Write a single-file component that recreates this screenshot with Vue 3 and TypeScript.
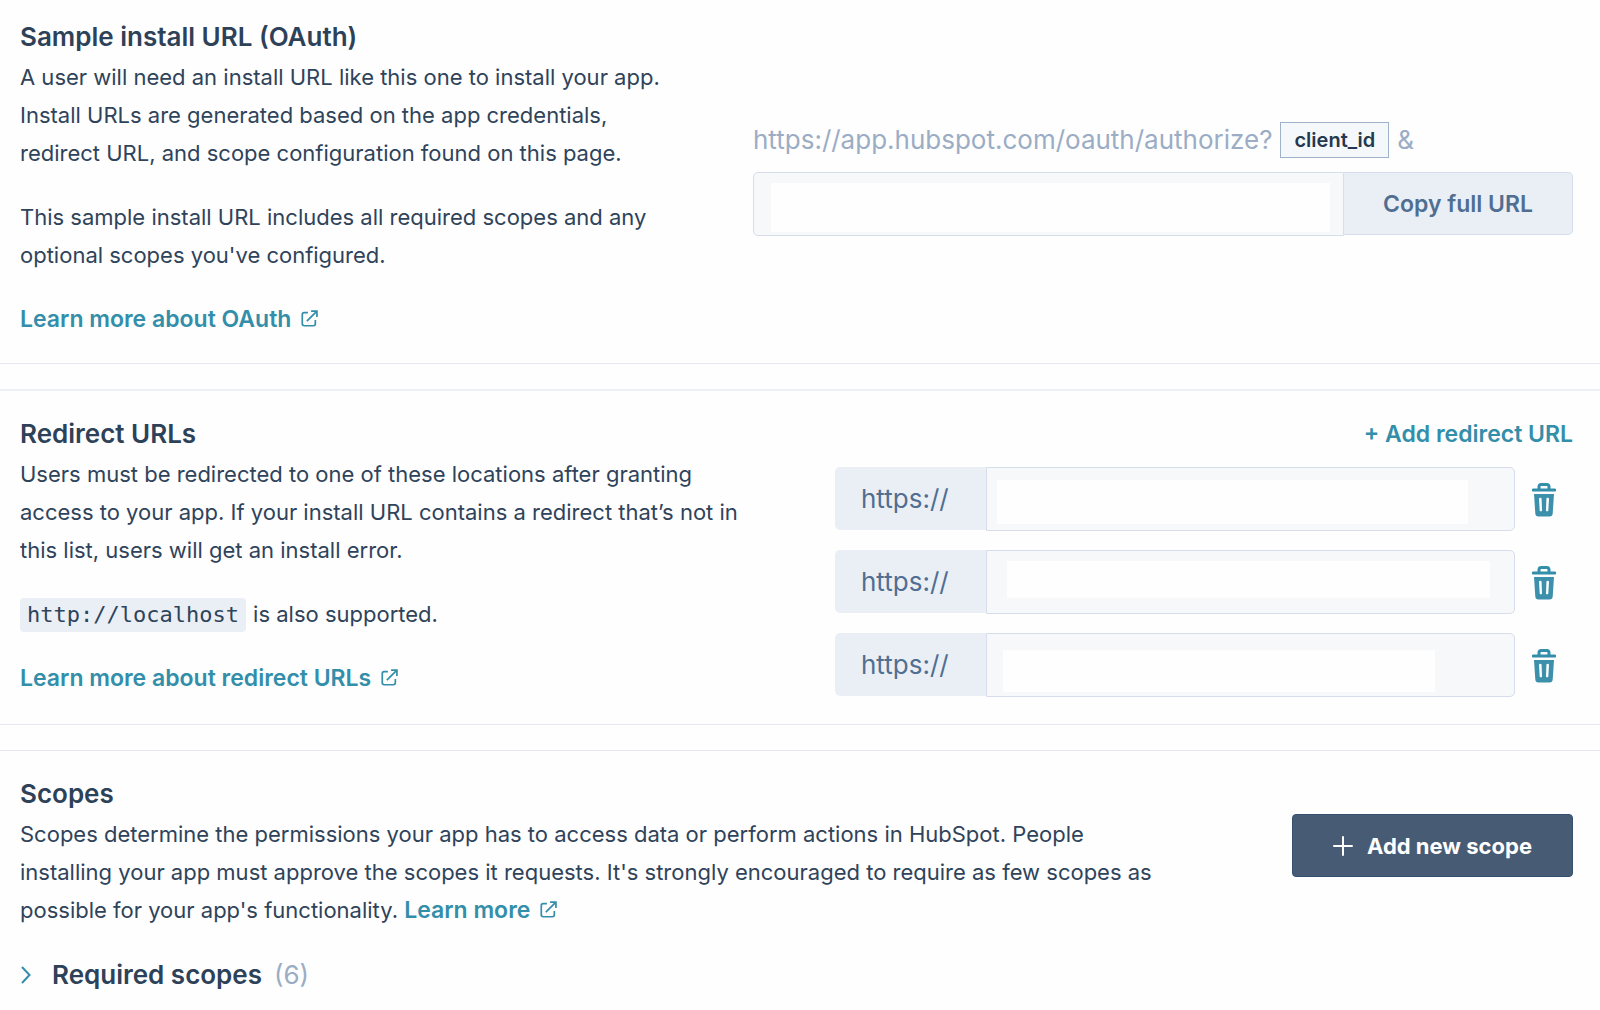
<script setup lang="ts">
import { ref } from 'vue'

interface Mask {
  left: number
  right: number
  top: number
  bottom: number
}

interface RedirectUrl {
  id: number
  value: string
  mask: Mask
}

const installUrl = ref('')
const requiredCount = 6
const redirects = ref<RedirectUrl[]>([
  { id: 1, value: '', mask: { left: 11, right: 47, top: 13, bottom: 7 } },
  { id: 2, value: '', mask: { left: 21, right: 25, top: 11, bottom: 16 } },
  { id: 3, value: '', mask: { left: 17, right: 80, top: 17, bottom: 5 } },
])

const maskStyle = (mask: Mask) => ({
  left: `${mask.left}px`,
  right: `${mask.right}px`,
  top: `${mask.top}px`,
  bottom: `${mask.bottom}px`,
})
</script>

<template>
  <main class="page">
    <section class="panel install">
      <div class="copy">
        <h2>Sample install URL (OAuth)</h2>
        <p>
          A user will need an install URL like this one to install your app.<br />
          Install URLs are generated based on the app credentials,<br />
          redirect URL, and scope configuration found on this page.
        </p>
        <p>
          This sample install URL includes all required scopes and any<br />
          optional scopes you've configured.
        </p>
        <p>
          <a href="#oauth">Learn more about OAuth<svg class="ext" viewBox="0 0 16 16" aria-hidden="true"><path d="M6.5 2.5H3A1.8 1.8 0 0 0 1.2 4.300V13A1.800 1.800 0 0 0 3 14.800H11.700A1.800 1.800 0 0 0 13.500 13V9.500M5.500 10.500L14.500 1.500M9.500 1H15V6.500" /></svg></a>
        </p>
      </div>
      <div class="url-box">
        <label class="url-line" for="install-url">
          <span>https://app.hubspot.com/oauth/authorize?</span>
          <span class="chip">client_id</span>
          <span>&amp;</span>
        </label>
        <div class="copy-row">
          <div class="field left-round">
            <input id="install-url" v-model="installUrl" type="text" readonly />
            <span class="mask" :style="maskStyle({ left: 18, right: 14, top: 11, bottom: 4 })"></span>
          </div>
          <button type="button" class="copy-btn">Copy full URL</button>
        </div>
      </div>
    </section>

    <section class="panel redirect">
      <div class="copy">
        <h2>Redirect URLs</h2>
        <p>
          Users must be redirected to one of these locations after granting<br />
          access to your app. If your install URL contains a redirect that’s not in<br />
          this list, users will get an install error.
        </p>
        <p><code>http://localhost</code> is also supported.</p>
        <p>
          <a href="#redirects">Learn more about redirect URLs<svg class="ext" viewBox="0 0 16 16" aria-hidden="true"><path d="M6.5 2.5H3A1.8 1.8 0 0 0 1.2 4.300V13A1.800 1.800 0 0 0 3 14.800H11.700A1.800 1.800 0 0 0 13.500 13V9.500M5.500 10.500L14.500 1.500M9.500 1H15V6.500" /></svg></a>
        </p>
      </div>
      <div class="redirect-side">
        <button type="button" class="link-btn">+ Add redirect URL</button>
        <div class="redirect-list">
          <div v-for="item in redirects" :key="item.id" class="redirect-row">
            <label class="prefix" :for="`redirect-${item.id}`">https://</label>
            <div class="field right-round">
              <input :id="`redirect-${item.id}`" v-model="item.value" type="text" />
              <span class="mask" :style="maskStyle(item.mask)"></span>
            </div>
            <button type="button" class="trash" aria-label="Delete redirect URL">
              <svg viewBox="0 0 24 34" aria-hidden="true">
                <path class="lid" d="M1.300 7H22.700M7 6.500V3.800A2.300 2.300 0 0 1 9.300 1.500H14.700A2.300 2.300 0 0 1 17 3.800V6.500" />
                <path class="can" fill-rule="evenodd" d="M2 11H22L20.700 30.500A3.200 3.200 0 0 1 17.500 33.500H6.500A3.200 3.200 0 0 1 3.300 30.500ZM7 16L7.700 27.500A1.200 1.200 0 0 0 10 27.500L9.600 16A1.300 1.300 0 0 0 7 16ZM14.400 16L14 27.500A1.200 1.200 0 0 0 16.300 27.500L17 16A1.300 1.300 0 0 0 14.400 16Z" />
              </svg>
            </button>
          </div>
        </div>
      </div>
    </section>

    <section class="panel scopes">
      <div class="scopes-head">
        <div class="copy">
          <h2>Scopes</h2>
          <p>
            Scopes determine the permissions your app has to access data or perform actions in HubSpot. People<br />
            installing your app must approve the scopes it requests. It's strongly encouraged to require as few scopes as<br />
            possible for your app's functionality.
            <a href="#scopes">Learn more<svg class="ext" viewBox="0 0 16 16" aria-hidden="true"><path d="M6.5 2.5H3A1.8 1.8 0 0 0 1.2 4.300V13A1.800 1.800 0 0 0 3 14.800H11.700A1.800 1.800 0 0 0 13.500 13V9.500M5.500 10.500L14.500 1.500M9.500 1H15V6.500" /></svg></a>
          </p>
        </div>
        <button type="button" class="add-btn">
          <svg viewBox="0 0 20 20" aria-hidden="true"><path d="M10 1V19M1 10H19" /></svg>
          Add new scope
        </button>
      </div>
      <button type="button" class="expander" aria-expanded="false">
        <svg viewBox="0 0 12 18" aria-hidden="true"><path d="M2 1L9.500 9L2 17" /></svg>
        <span class="expander-title">Required scopes</span>
        <span class="count">({{ requiredCount }})</span>
      </button>
    </section>
  </main>
</template>

<style>
body {
  margin: 0;
  background: #fefefe;
}
</style>

<style scoped>
.page {
  font-family: Inter, "Open Sans", sans-serif;
  font-size: 22px;
  font-weight: 400;
  line-height: 38px;
  color: #2f435a;
  overflow-x: hidden;
}
button,
input {
  font: inherit;
  box-sizing: border-box;
}
button {
  cursor: pointer;
}
.panel {
  box-sizing: border-box;
  padding: 23px 27px 27px 20px;
  border-top: 2px solid #eceff5;
  border-bottom: 1px solid #e5e8ee;
  margin-bottom: 25px;
}
.panel.install {
  padding-top: 17px;
  padding-bottom: 25px;
  border-top: 0;
}
.panel.scopes {
  border-top: 1px solid #e5e8ee;
  border-bottom: 0;
  margin-bottom: 0;
}
.copy {
  white-space: nowrap;
}
h2 {
  margin: 0 0 1px;
  font-size: 26px;
  font-weight: 600;
  line-height: 40px;
  color: #2d4258;
}
p {
  margin: 0 0 26px;
}
p:last-child {
  margin-bottom: 0;
}
a {
  color: #338eaa;
  font-size: 23px;
  font-weight: 600;
  line-height: 1;
  text-decoration: none;
}
.ext {
  width: 17px;
  height: 17px;
  margin-left: 10px;
  fill: none;
  stroke: #338eaa;
  stroke-width: 1.6;
}
code {
  display: inline-block;
  padding: 0 7px;
  margin-right: 1px;
  line-height: 34px;
  border-radius: 4px;
  background: #eaeff6;
  font-family: "DejaVu Sans Mono", monospace;
  font-size: 22px;
}
.install {
  display: grid;
  grid-template-columns: minmax(0, 733fr) minmax(0, 820fr);
}
.url-box {
  padding-top: 104px;
}
.url-line {
  display: flex;
  align-items: center;
  gap: 8px;
  height: 38px;
  margin-bottom: 13px;
  font-size: 26px;
  color: #9badc5;
  white-space: nowrap;
}
.chip {
  padding: 0 13px;
  border: 1px solid #9fb2cb;
  background: #f5f8fa;
  color: #24384f;
  font-size: 20px;
  font-weight: 600;
  line-height: 34px;
}
.copy-row {
  display: flex;
  align-items: flex-start;
}
.field {
  position: relative;
  flex: 1;
  height: 64px;
}
.field input {
  display: block;
  width: 100%;
  height: 100%;
  padding: 0 18px;
  border: 1px solid #d5deea;
  background: #f6f8fa;
  color: #33475b;
  outline: none;
}
.left-round input {
  border-radius: 5px 0 0 5px;
}
.right-round input {
  border-radius: 0 5px 5px 0;
}
.mask {
  position: absolute;
  background: #fefefe;
}
.copy-btn {
  width: 229px;
  height: 63px;
  padding: 0;
  border: 1px solid #d5deea;
  border-left: 0;
  border-radius: 0 5px 5px 0;
  background: #eaeff6;
  color: #506e91;
  font-size: 23px;
  font-weight: 600;
}
.redirect {
  display: grid;
  grid-template-columns: minmax(0, 815fr) minmax(0, 738fr);
}
.redirect-side {
  display: flex;
  flex-direction: column;
  gap: 13px;
}
.redirect-list {
  display: flex;
  flex-direction: column;
  gap: 19px;
}
.link-btn {
  align-self: flex-end;
  height: 40px;
  padding: 0;
  border: 0;
  background: none;
  color: #338eaa;
  font-size: 23px;
  font-weight: 600;
}
.redirect-row {
  display: flex;
  align-items: flex-start;
}
.prefix {
  width: 151px;
  box-sizing: border-box;
  padding-left: 26px;
  border-radius: 5px 0 0 5px;
  background: #eaeff6;
  color: #506e91;
  font-size: 26px;
  line-height: 63px;
}
.trash {
  width: 58px;
  height: 64px;
  padding: 2px 0 0 17px;
  border: 0;
  background: none;
}
.trash svg {
  display: block;
  width: 24px;
  height: 34px;
}
.lid {
  fill: none;
  stroke: #338eaa;
  stroke-width: 3;
  stroke-linecap: round;
}
.can {
  fill: #3c90ac;
}
.scopes-head {
  display: flex;
  justify-content: space-between;
  align-items: center;
}
.add-btn {
  display: flex;
  align-items: center;
  justify-content: center;
  gap: 14px;
  width: 281px;
  height: 63px;
  flex: none;
  margin-top: -12px;
  padding: 0;
  border: 1px solid #33506f;
  border-radius: 4px;
  background: #485b74;
  color: #fff;
  font-weight: 700;
}
.add-btn svg {
  width: 20px;
  height: 20px;
  fill: none;
  stroke: #fff;
  stroke-width: 2;
  stroke-linecap: round;
}
.expander {
  display: flex;
  align-items: center;
  margin-top: 27px;
  padding: 0;
  border: 0;
  background: none;
  color: #2d4258;
  font-size: 26px;
}
.expander svg {
  width: 12px;
  height: 18px;
  margin-right: 20px;
  fill: none;
  stroke: #338eaa;
  stroke-width: 2;
}
.expander-title {
  font-weight: 600;
}
.count {
  margin-left: 12px;
  color: #9badc5;
}
</style>
